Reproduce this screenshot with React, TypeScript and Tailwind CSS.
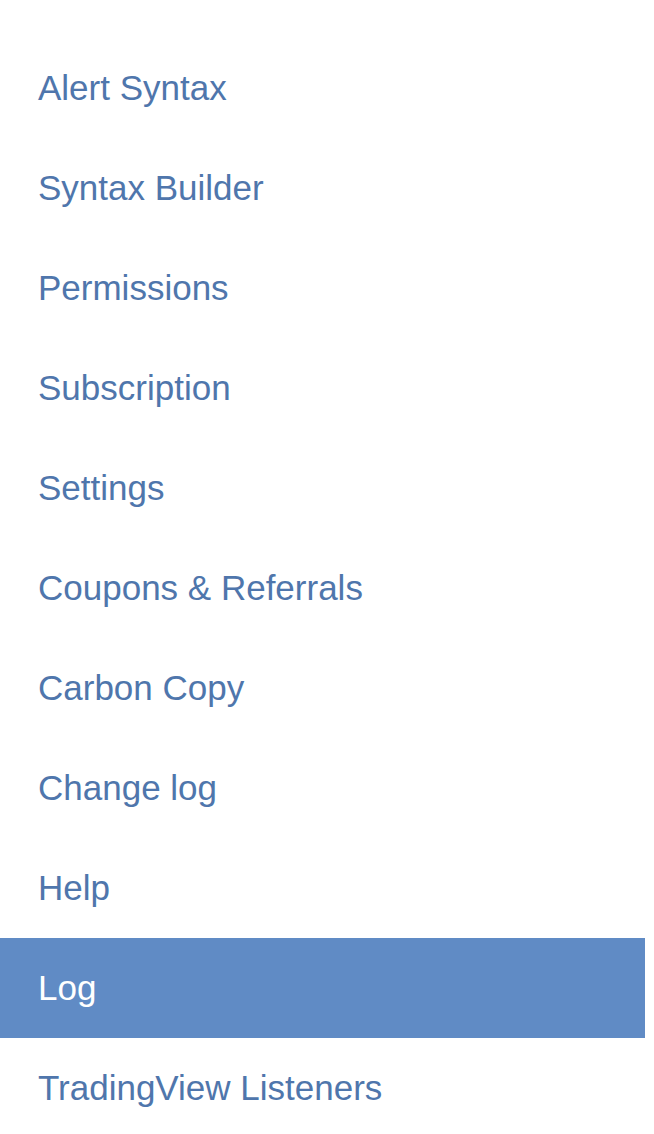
import React from 'react'

const items = [
  'Alert Syntax',
  'Syntax Builder',
  'Permissions',
  'Subscription',
  'Settings',
  'Coupons & Referrals',
  'Carbon Copy',
  'Change log',
  'Help',
  'Log',
  'TradingView Listeners',
]

export default function App(): React.JSX.Element {
  const active = 'Log'
  return (
    <div className="min-h-screen bg-white pt-[38px] font-['Liberation_Sans',Arial,sans-serif]">
      <ul className="w-[645px]">
        {items.map((item) => (
          <li
            key={item}
            className={
              item === active
                ? 'h-[100px] flex items-center pl-[38px] text-[35px] text-white bg-[#608bc5]'
                : 'h-[100px] flex items-center pl-[38px] text-[35px] text-[#4f76ac]'
            }
          >
            {item}
          </li>
        ))}
      </ul>
    </div>
  )
}
